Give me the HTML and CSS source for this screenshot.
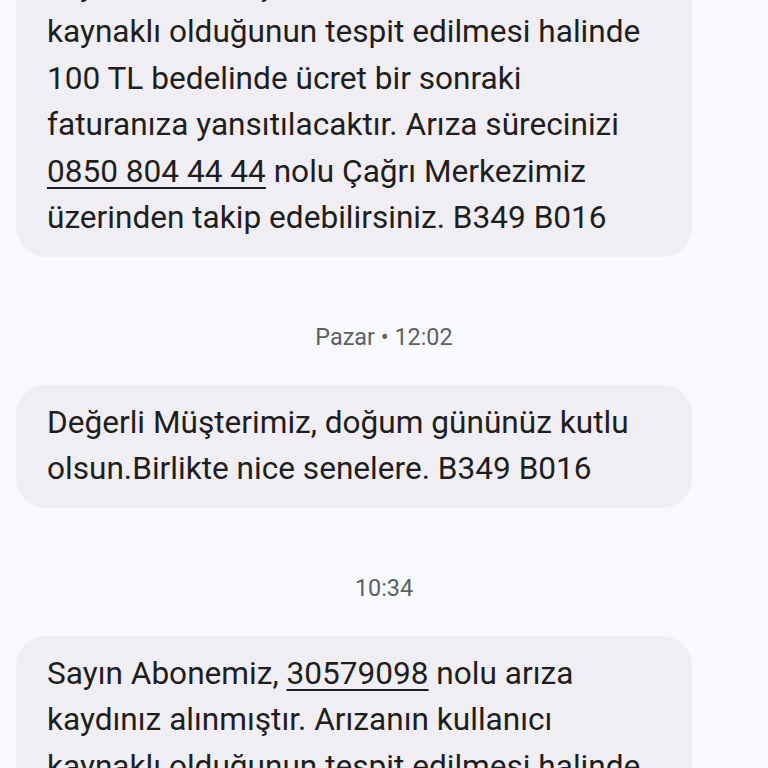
FILE: index.html
```html
<!DOCTYPE html>
<html lang="tr">
<head>
<meta charset="utf-8">
<title>Mesajlar</title>
<link rel="stylesheet" href="styles.css">
</head>
<body>
<main class="thread">
  <div class="bubble">Sayın Abonemiz, <span class="link">30579098</span> nolu arıza<br>kaydınız alınmıştır. Arızanın kullanıcı<br>kaynaklı olduğunun tespit edilmesi halinde<br>100 TL bedelinde ücret bir sonraki<br>faturanıza yansıtılacaktır. Arıza sürecinizi<br><span class="link">0850 804 44 44</span> nolu Çağrı Merkezimiz<br>üzerinden takip edebilirsiniz. B349 B016</div>
  <div class="stamp">Pazar • 12:02</div>
  <div class="bubble">Değerli Müşterimiz, doğum gününüz kutlu<br>olsun.Birlikte nice senelere. B349 B016</div>
  <div class="stamp">10:34</div>
  <div class="bubble">Sayın Abonemiz, <span class="link">30579098</span> nolu arıza<br>kaydınız alınmıştır. Arızanın kullanıcı<br>kaynaklı olduğunun tespit edilmesi halinde<br>100 TL bedelinde ücret bir sonraki<br>faturanıza yansıtılacaktır. Arıza sürecinizi<br><span class="link">0850 804 44 44</span> nolu Çağrı Merkezimiz<br>üzerinden takip edebilirsiniz. B349 B016</div>
</main>
</body>
</html>
```
FILE: styles.css
```css
html, body {
  margin: 0;
  padding: 0;
  background: #f8f9fd;
  height: 768px;
  overflow: hidden;
}
body {
  font-family: Roboto, "Noto Sans", sans-serif;
  color: #1e1e21;
}
.thread {
  display: flex;
  flex-direction: column;
  margin-top: -99px;
}
.bubble {
  margin-left: 16px;
  width: 676px;
  box-sizing: border-box;
  padding: 15px 31px;
  border-radius: 30px;
  background: #f0eef3;
  font-size: 31.6px;
  line-height: 46.5px;
  white-space: nowrap;
}
.link {
  text-decoration: underline;
  text-decoration-thickness: 2px;
  text-underline-offset: 5px;
}
.stamp {
  text-align: center;
  font-size: 23.4px;
  line-height: 30px;
  color: #5e6066;
  margin: 65px 0 33px;
}
```
